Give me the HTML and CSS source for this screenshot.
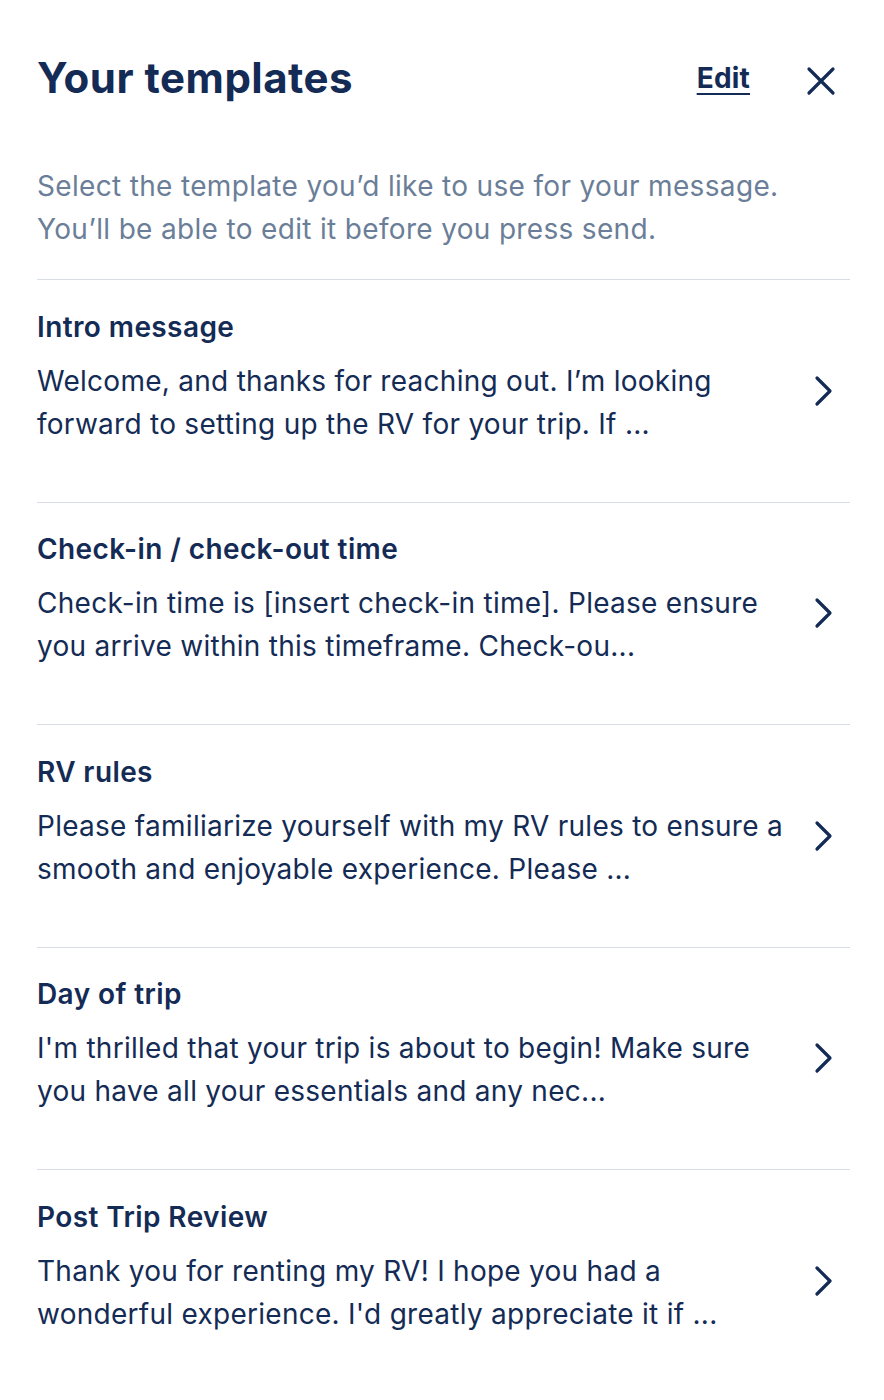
FILE: index.html
```html
<!DOCTYPE html>
<html lang="en">
<head>
<meta charset="utf-8">
<title>Your templates</title>
<link rel="stylesheet" href="styles.css">
</head>
<body>
<div class="panel">
  <header class="header">
    <h1 class="title">Your templates</h1>
    <div class="actions">
      <a class="edit" href="#">Edit</a>
      <button class="close" aria-label="Close">
        <svg width="30" height="30" viewBox="0 0 30 30"><path d="M3 3 L27 27 M27 3 L3 27" stroke="#142b55" stroke-width="3.2" stroke-linecap="round" fill="none"/></svg>
      </button>
    </div>
  </header>
  <p class="intro">Select the template you’d like to use for your message.<br>You’ll be able to edit it before you press send.</p>
  <ul class="list">
    <li class="item">
      <div class="text">
        <h2 class="name">Intro message</h2>
        <p class="body">Welcome, and thanks for reaching out. I’m looking<br>forward to setting up the RV for your trip. If ...</p>
      </div>
      <svg class="chev" width="24" height="32" viewBox="0 0 24 32"><path d="M5 3 L18 16 L5 29" stroke="#142b55" stroke-width="3.2" stroke-linecap="round" stroke-linejoin="round" fill="none"/></svg>
    </li>
    <li class="item">
      <div class="text">
        <h2 class="name">Check-in / check-out time</h2>
        <p class="body">Check-in time is [insert check-in time]. Please ensure<br>you arrive within this timeframe. Check-ou...</p>
      </div>
      <svg class="chev" width="24" height="32" viewBox="0 0 24 32"><path d="M5 3 L18 16 L5 29" stroke="#142b55" stroke-width="3.2" stroke-linecap="round" stroke-linejoin="round" fill="none"/></svg>
    </li>
    <li class="item">
      <div class="text">
        <h2 class="name">RV rules</h2>
        <p class="body">Please familiarize yourself with my RV rules to ensure a<br>smooth and enjoyable experience. Please ...</p>
      </div>
      <svg class="chev" width="24" height="32" viewBox="0 0 24 32"><path d="M5 3 L18 16 L5 29" stroke="#142b55" stroke-width="3.2" stroke-linecap="round" stroke-linejoin="round" fill="none"/></svg>
    </li>
    <li class="item">
      <div class="text">
        <h2 class="name">Day of trip</h2>
        <p class="body">I'm thrilled that your trip is about to begin! Make sure<br>you have all your essentials and any nec...</p>
      </div>
      <svg class="chev" width="24" height="32" viewBox="0 0 24 32"><path d="M5 3 L18 16 L5 29" stroke="#142b55" stroke-width="3.2" stroke-linecap="round" stroke-linejoin="round" fill="none"/></svg>
    </li>
    <li class="item last">
      <div class="text">
        <h2 class="name">Post Trip Review</h2>
        <p class="body">Thank you for renting my RV! I hope you had a<br>wonderful experience. I'd greatly appreciate it if ...</p>
      </div>
      <svg class="chev" width="24" height="32" viewBox="0 0 24 32"><path d="M5 3 L18 16 L5 29" stroke="#142b55" stroke-width="3.2" stroke-linecap="round" stroke-linejoin="round" fill="none"/></svg>
    </li>
  </ul>
</div>
</body>
</html>
```
FILE: styles.css
```css
* { box-sizing: border-box; }
html, body { margin: 0; padding: 0; background: #fff; }
body { font-family: Inter, "Noto Sans", sans-serif; color: #142b55; }
.panel { padding: 48px 34px 0 37px; }
.header { display: flex; align-items: center; justify-content: space-between; }
.title { margin: 0; font-size: 42px; line-height: 60px; font-weight: 700; letter-spacing: 0.5px; }
.actions { display: flex; align-items: center; gap: 56px; }
.edit { font-size: 28px; font-weight: 700; color: #142b55; text-decoration: underline; text-underline-offset: 5px; text-decoration-thickness: 2px; letter-spacing: 0.2px; }
.close { border: 0; background: none; padding: 0; margin: 5px 14px 0 0; display: flex; }
.intro { margin: 57px 0 0; font-size: 28px; line-height: 43px; letter-spacing: 0.33px; color: #6b7e98; padding-bottom: 28px; border-bottom: 1px solid #d9dde4; }
.list { list-style: none; margin: 0; padding: 0; }
.item { display: flex; align-items: center; justify-content: space-between; border-bottom: 1px solid #d9dde4; }
.item.last { border-bottom: 0; }
.text { padding: 26.5px 0 56px; }
.name { margin: 0; font-size: 28px; line-height: 40px; font-weight: 600; letter-spacing: 0.4px; }
.body { margin: 13px 0 0; font-size: 28px; line-height: 43px; letter-spacing: 0.27px; }
.chev { flex: none; margin-right: 14px; }
```
